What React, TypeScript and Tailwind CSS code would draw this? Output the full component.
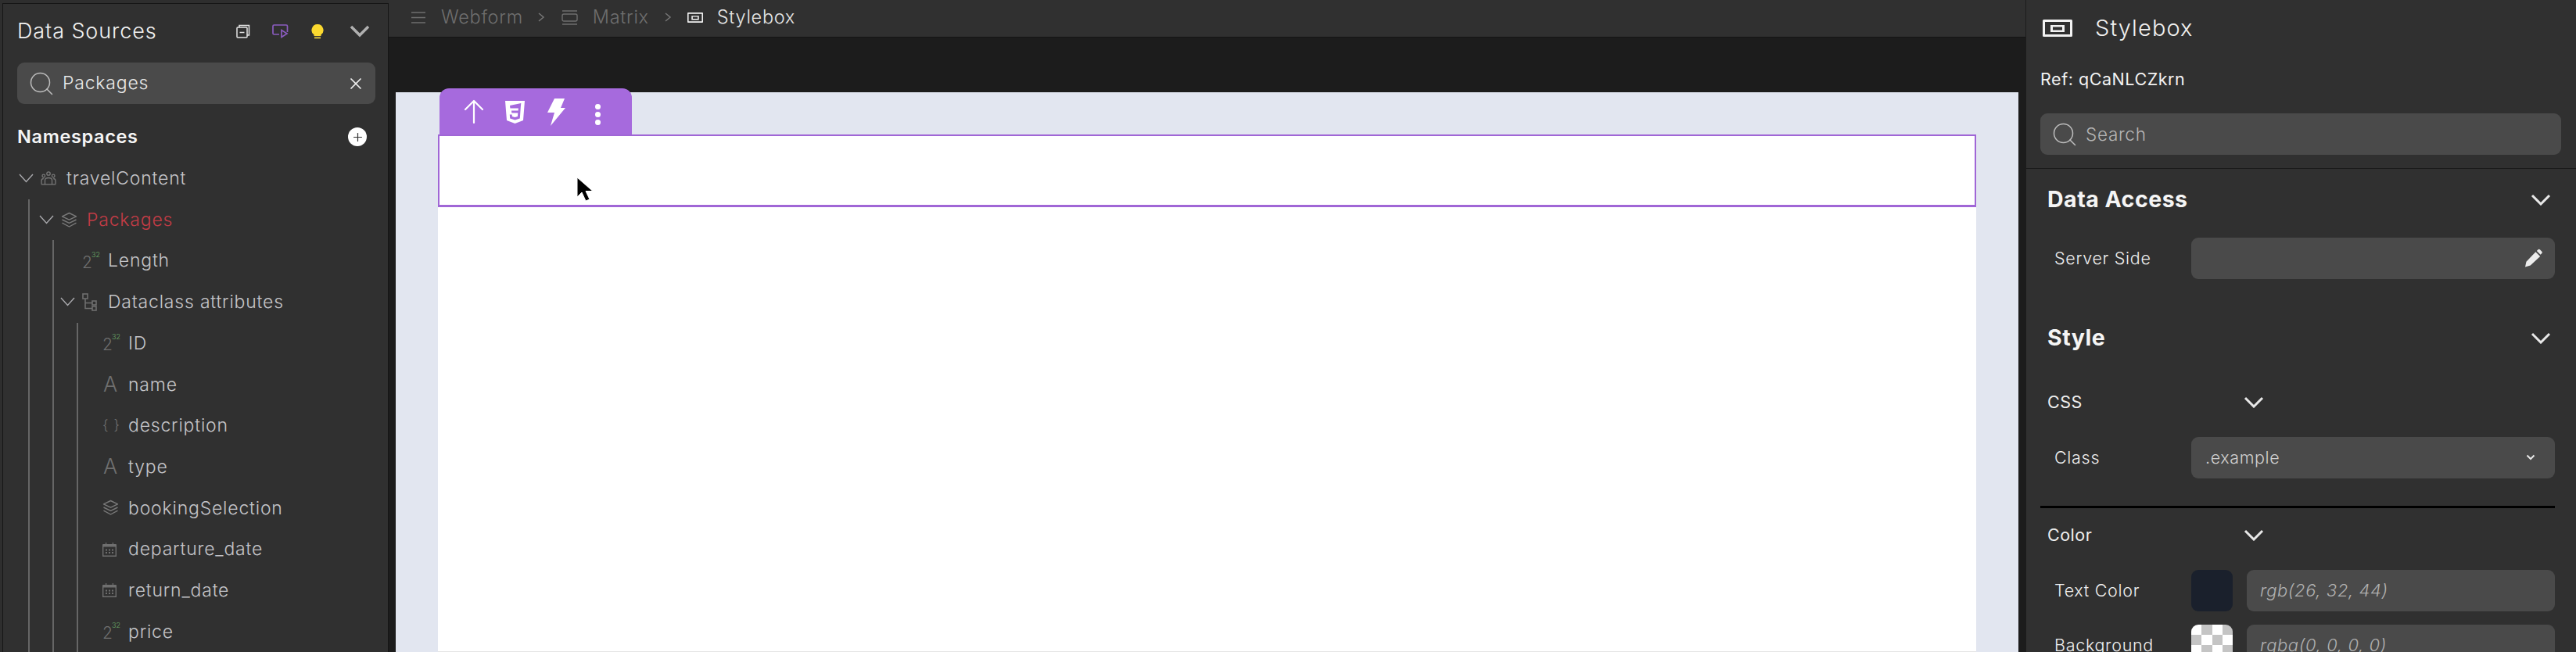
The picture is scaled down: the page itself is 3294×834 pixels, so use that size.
import React from "react";
import { Search, X, Plus } from "lucide-react";

const Chevron = () => (
  <svg width="19" height="12" viewBox="0 0 19 12" fill="none" stroke="#a9a9ad" strokeWidth="1.4"><path d="M1 1l8.5 9.5L18 1" /></svg>
);

const Num = () => (
  <span className="relative block w-[24px] h-[24px] text-[#6f6f6f] text-[21px] leading-[28px] font-light">
    2<span className="absolute left-[12px] top-[-2px] text-[9px] leading-[12px] text-[#6aa866]">32</span>
  </span>
);
const Letter = () => <span className="block w-[20px] text-center text-[#6f6f6f] text-[27px] leading-[24px] font-light">A</span>;
const Braces = () => <span className="block w-[22px] text-center whitespace-nowrap text-[#6f6f6f] text-[18px] leading-[24px] font-light tracking-[1px]">{"{ }"}</span>;
const Layers = () => (
  <svg width="21" height="21" viewBox="0 0 21 21" fill="none" stroke="#7a7a7a" strokeWidth="1.4" strokeLinejoin="round">
    <path d="M10.5 1.5l9 4.3-9 4.3-9-4.3z" /><path d="M1.5 10l9 4.3 9-4.3" /><path d="M1.5 14.2l9 4.8 9-4.8" />
  </svg>
);
const Calendar = () => (
  <svg width="18" height="20" viewBox="0 0 18 20" fill="#6f6f6f">
    <path fillRule="evenodd" d="M1 3h3V1h1.2v2h7.6V1H14v2h3a1 1 0 0 1 1 1v15H0V4a1 1 0 0 1 1-1zM1.400 6.500v11h15.200v-11z" />
    <path d="M4 9.5h2v2H4zM8 9.5h2v2H8zM12 9.5h2v2h-2zM4 13h2v2H4zM8 13h2v2H8zM12 13h2v2h-2z" />
  </svg>
);
const Tree = () => (
  <svg width="19" height="23" viewBox="0 0 19 23" fill="none" stroke="#6f6f6f" strokeWidth="1.6">
    <rect x="1" y="1" width="6" height="6" /><rect x="13" y="10" width="5" height="5" /><rect x="13" y="17" width="5" height="5" /><path d="M4 7v12.5h9M4 12.5h9" />
  </svg>
);
const People = () => (
  <svg width="20" height="18" viewBox="0 0 20 18" fill="none" stroke="#787878" strokeWidth="1.3">
    <circle cx="10" cy="3" r="2.2" /><circle cx="3.8" cy="6" r="1.8" /><circle cx="16.2" cy="6" r="1.8" />
    <path d="M1 16.5v-4c0-2 1-3 2.8-3M19 16.5v-4c0-2-1-3-2.8-3M5.5 16.5v-5c0-2 2-3 4.500-3s4.500 1 4.500 3v5M.8 16.800h18.400" />
  </svg>
);
const BoxIcon = ({ w, h }: { w: number; h: number }) => (
  <svg width={w} height={h} viewBox="0 0 38 22" preserveAspectRatio="none"><path fillRule="evenodd" fill="#f2f2f2" d="M1.500 0h35A1.500 1.500 0 0 1 38 1.500v19a1.500 1.500 0 0 1-1.500 1.500h-35A1.500 1.500 0 0 1 0 20.500v-19A1.500 1.500 0 0 1 1.500 0zM3 3v16h32V3zM10 7h18v9H10zM13 9.500v4h12v-4z" /></svg>
);

function Row({ pad, chevron, icon, label, color }: { pad: string; chevron?: boolean; icon: React.ReactNode; label: string; color?: string }) {
  return (
    <div className={`flex items-center h-[52.7px] ${pad}`}>
      <span className="w-[28px] shrink-0 flex items-center">{chevron && <Chevron />}</span>
      <span className="w-[33px] shrink-0 flex items-center">{icon}</span>
      <span className={`text-[23px] tracking-[0.8px] font-light whitespace-nowrap ${color ?? "text-[#c4c4c8]"}`}>{label}</span>
    </div>
  );
}

function LeftPanel() {
  const leaves: [React.ReactNode, string][] = [
    [<Num />, "ID"], [<Letter />, "name"], [<Braces />, "description"], [<Letter />, "type"],
    [<Layers />, "bookingSelection"], [<Calendar />, "departure_date"], [<Calendar />, "return_date"], [<Num />, "price"],
  ];
  return (
    <aside className="w-[497px] shrink-0 h-full pt-[4px] pl-[3px] bg-[#2e2e2e]">
      <div className="h-full border-l border-t border-r border-[#151515] bg-[#303030] overflow-hidden">
        <div className="flex items-center h-[56px] pl-[18px] pr-[23px] mt-[7px]">
          <span className="text-[27px] tracking-[0.9px] font-light text-[#f2f2f2] flex-1">Data Sources</span>
          <svg className="mr-[28px]" width="18" height="18" viewBox="0 0 18 18" fill="none" stroke="#e4e4e4" strokeWidth="1.500"><rect x="1" y="4" width="13" height="13" rx="1" /><path d="M4 4V1.500h12.500V14H14M4.500 10.500h6" /></svg>
          <svg className="mr-[29px]" width="21" height="18" viewBox="0 0 21 18" fill="none" stroke="#8b5cc0" strokeWidth="1.700"><path d="M9 13H2.500A1.500 1.500 0 0 1 1 11.500v-9A1.500 1.500 0 0 1 2.500 1h15.500A1.500 1.500 0 0 1 19.500 2.500V10" /><path d="M12 7.500v9l7-4.500z" /></svg>
          <svg className="mr-[33px]" width="16" height="19" viewBox="0 0 16 19"><path fill="#fbd92f" d="M8 0a7.500 7.500 0 0 1 4.500 13.500V15h-9v-1.500A7.500 7.500 0 0 1 8 0z" /><rect x="4" y="16" width="8" height="2.500" fill="#b9a43a" /></svg>
          <svg width="26" height="16" viewBox="0 0 26 16" fill="none" stroke="#b0b0b0" strokeWidth="3.500"><path d="M2 2l11 11L24 2" /></svg>
        </div>
        <div className="ml-[18px] mr-[16px] mt-[12px] h-[53px] rounded-[9px] bg-[#4a4a4a] flex items-center pl-[13px] pr-[13px]">
          <Search size={36} strokeWidth={1} className="text-[#bdbdbd] shrink-0" />
          <span className="ml-[9px] flex-1 text-[23px] tracking-[0.8px] font-light text-[#e8e8e8]">Packages</span>
          <X size={24} strokeWidth={1.700} className="text-[#f0f0f0]" />
        </div>
        <div className="flex items-center justify-between pl-[18px] pr-[27px] mt-[20px] h-[44px]">
          <span className="text-[23.500px] font-semibold tracking-[0.65px] text-[#f5f5f5]">Namespaces</span>
          <span className="w-[24px] h-[24px] rounded-full bg-white flex items-center justify-center"><Plus size={17} strokeWidth={1.700} className="text-[#333]" /></span>
        </div>
        <div className="mt-[5px]">
          <Row pad="pl-[20px]" chevron icon={<People />} label="travelContent" />
          <div className="ml-[32px] border-l-2 border-[#666666]">
            <Row pad="pl-[12px]" chevron icon={<Layers />} label="Packages" color="text-[#c23c46]" />
            <div className="ml-[29px] border-l-2 border-[#666666]">
              <Row pad="pl-[8px]" icon={<Num />} label="Length" />
              <Row pad="pl-[8px]" chevron icon={<Tree />} label="Dataclass attributes" />
              <div className="ml-[29px] border-l-2 border-[#666666]">
                {leaves.map(([icon, label]) => <Row key={label} pad="pl-[3px]" icon={icon} label={label} />)}
              </div>
            </div>
          </div>
        </div>
      </div>
    </aside>
  );
}

function TopBar() {
  return (
    <div className="h-[48px] shrink-0 bg-[#303030] border-b border-[#141414] flex items-center pl-[29px] pb-[3px] text-[23.500px] font-light tracking-[0.7px]">
      <svg width="18" height="15" viewBox="0 0 18 15" stroke="#6e6e6e" strokeWidth="1.600"><path d="M0 1h18M0 7.500h18M0 14h18" /></svg>
      <span className="ml-[20px] text-[#6e6e6e]">Webform</span>
      <svg className="ml-[19px]" width="9" height="12" viewBox="0 0 9 12" fill="none" stroke="#777" strokeWidth="1.500"><path d="M1 1l6 5-6 5" /></svg>
      <svg className="ml-[21px]" width="21" height="19" viewBox="0 0 21 19" fill="none" stroke="#6e6e6e" strokeWidth="1.400"><path d="M1 1h19M1 18h19" /><rect x="1" y="5" width="19" height="9" rx="2" /></svg>
      <span className="ml-[19px] text-[#6e6e6e]">Matrix</span>
      <svg className="ml-[20px]" width="9" height="12" viewBox="0 0 9 12" fill="none" stroke="#777" strokeWidth="1.500"><path d="M1 1l6 5-6 5" /></svg>
      <span className="ml-[20px]"><BoxIcon w={20} h={13} /></span>
      <span className="ml-[18px] text-[#e6e6e6]">Stylebox</span>
    </div>
  );
}

function Canvas() {
  return (
    <div className="flex-1 bg-[#1c1c1c] pt-[70px] px-[9px] overflow-hidden">
      <div className="relative h-full bg-[#e2e6f0] pt-[54px] px-[54px]">
        <div className="absolute left-[56px] top-[-5px] w-[246px] h-[59px] rounded-t-[12px] bg-[#a66add] text-white">
          <svg className="absolute left-[31px] top-[14px]" width="26" height="32" viewBox="0 0 26 32" fill="none" stroke="#fff" strokeWidth="2.200" strokeLinecap="round" strokeLinejoin="round"><path d="M13 30V2M2 13L13 2l11 11" /></svg>
          <svg className="absolute left-[84px] top-[16px]" width="25" height="29" viewBox="0 0 25 29"><path fill="#fff" fillRule="evenodd" d="M0 0h25l-2 25-10.500 4L2 25zM6 6l.4 3.500h10.500l-.3 3H8l.3 3h8l-.4 4.500-3.500 1-3.500-1-.2-2.500H5.800l.4 5 6.300 2 6.300-2 1-14.500.5-5z" /></svg>
          <svg className="absolute left-[138px] top-[13px]" width="23" height="35" viewBox="0 0 23 35"><path fill="#fff" d="M9 0h13l-5 12h6L4 35l5-17H0z" /></svg>
          <span className="absolute left-[199px] top-[20px] flex flex-col gap-[3px]">
            <span className="w-[7px] h-[7px] rounded-full bg-white" /><span className="w-[7px] h-[7px] rounded-full bg-white" /><span className="w-[7px] h-[7px] rounded-full bg-white" />
          </span>
        </div>
        <div className="h-full bg-white border-b border-[#e4e4e4]">
          <div className="relative h-[93px] border-2 border-b-[3px] border-[#a066d6] bg-white">
            <svg className="absolute left-[175px] top-[52px]" width="24" height="34" viewBox="0 0 24 34"><path fill="#000" stroke="#fff" strokeWidth="1" d="M1 1v25l6-6 5 11 5-2-5-10.500h9z" /></svg>
          </div>
        </div>
      </div>
    </div>
  );
}

const Label = ({ children, cls }: { children: React.ReactNode; cls?: string }) => (
  <span className={`text-[21.500px] font-light tracking-[0.7px] text-[#efefef] whitespace-nowrap ${cls ?? ""}`}>{children}</span>
);
const Section = ({ title, mt }: { title: string; mt: string }) => (
  <div className={`flex items-center justify-between ml-[27px] mr-[32px] ${mt}`}>
    <span className="text-[28.500px] font-bold tracking-[0.5px] text-[#f5f5f5]">{title}</span>
    <svg width="26" height="15" viewBox="0 0 26 15" fill="none" stroke="#e8e8e8" strokeWidth="3"><path d="M2 2l11 11L24 2" /></svg>
  </div>
);
const SubHead = ({ title, mt }: { title: string; mt: string }) => (
  <div className={`flex items-center ml-[27px] h-[30px] ${mt}`}>
    <span className="w-[251px] text-[21.500px] font-normal tracking-[0.5px] text-[#efefef]">{title}</span>
    <svg width="26" height="15" viewBox="0 0 26 15" fill="none" stroke="#e8e8e8" strokeWidth="3"><path d="M2 2l11 11L24 2" /></svg>
  </div>
);
const ColorRow = ({ label, swatch, value, h }: { label: string; swatch: React.ReactNode; value: string; h: string }) => (
  <div className={`flex items-center ml-[36px] mr-[27px] ${h}`}>
    <Label cls="w-[175px] shrink-0">{label}</Label>
    <div className="w-[53px] h-[53px] rounded-[9px] overflow-hidden shrink-0">{swatch}</div>
    <div className="ml-[18px] flex-1 h-[53px] rounded-[9px] bg-[#4a4a4a] flex items-center pl-[17px] italic font-light text-[22px] tracking-[0.6px] text-[#b0b0b0]">{value}</div>
  </div>
);

function RightPanel() {
  const checks = ["bg-white", "bg-[#c4c4c4]", "bg-white", "bg-[#c4c4c4]", "bg-[#c4c4c4]", "bg-white", "bg-[#c4c4c4]", "bg-white", "bg-white", "bg-[#c4c4c4]", "bg-white", "bg-[#c4c4c4]", "bg-[#c4c4c4]", "bg-white", "bg-[#c4c4c4]", "bg-white"];
  return (
    <aside className="w-[704px] shrink-0 h-full bg-[#303030] border-l border-[#1c1c1c] overflow-hidden">
      <div className="flex items-center ml-[21px] mt-[20px] h-[32px]">
        <BoxIcon w={38} h={22} />
        <span className="ml-[29px] text-[29px] font-light tracking-[1.100px] text-[#f0f0f0]">Stylebox</span>
      </div>
      <div className="ml-[18px] mt-[33px] h-[32px] flex items-center text-[21.500px] text-[#f2f2f2] tracking-[0.55px]">Ref: qCaNLCZkrn</div>
      <div className="ml-[18px] mr-[19px] mt-[28px] h-[53px] rounded-[9px] bg-[#4a4a4a] flex items-center pl-[13px]">
        <Search size={36} strokeWidth={1} className="text-[#bdbdbd]" />
        <span className="ml-[9px] text-[22.500px] font-light tracking-[0.7px] text-[#b5b5b5]">Search</span>
      </div>
      <div className="mt-[17px] border-t border-[#1a1a1a]" />
      <Section title="Data Access" mt="mt-[18px]" />
      <div className="flex items-center ml-[36px] mr-[27px] mt-[27px]">
        <Label cls="w-[175px] shrink-0">Server Side</Label>
        <div className="flex-1 h-[53px] rounded-[9px] bg-[#4a4a4a] flex items-center justify-end pr-[16px]">
          <svg width="22" height="24" viewBox="0 0 23 24"><path fill="#ececec" d="M0 24l1.500-7L14 4l6 6L7 22zM15.500 2.500l1.500-1.500a2 2 0 0 1 3 0l2 2a2 2 0 0 1 0 3l-1.500 1.500z" /></svg>
        </div>
      </div>
      <Section title="Style" mt="mt-[54px]" />
      <SubHead title="CSS" mt="mt-[46px]" />
      <div className="flex items-center ml-[36px] mr-[27px] mt-[29px]">
        <Label cls="w-[175px] shrink-0">Class</Label>
        <div className="flex-1 h-[53px] rounded-[9px] bg-[#4a4a4a] flex items-center justify-between pl-[18px] pr-[25px]">
          <span className="text-[21.500px] font-light tracking-[0.6px] text-[#d0d0d0]">.example</span>
          <svg width="12" height="8" viewBox="0 0 12 8" fill="none" stroke="#e8e8e8" strokeWidth="2"><path d="M1.500 1.500L6 6l4.500-4.500" /></svg>
        </div>
      </div>
      <div className="ml-[18px] mr-[27px] mt-[35px] border-t-[3px] border-black" />
      <SubHead title="Color" mt="mt-[20px]" />
      <ColorRow label="Text Color" h="h-[53px] mt-[29px]" value="rgb(26, 32, 44)" swatch={<div className="w-full h-full bg-[#1a202c]" />} />
      <ColorRow label="Background" h="h-[53px] mt-[17px]" value="rgba(0, 0, 0, 0)" swatch={<div className="grid grid-cols-4 grid-rows-4 w-full h-full">{checks.map((c, i) => <span key={i} className={c} />)}</div>} />
    </aside>
  );
}

export default function App() {
  return (
    <div className="flex w-[3294px] h-[834px] overflow-hidden bg-[#1c1c1c] [font-family:Inter,sans-serif]">
      <LeftPanel />
      <main className="flex-1 min-w-0 h-full flex flex-col">
        <TopBar />
        <Canvas />
      </main>
      <RightPanel />
    </div>
  );
}
